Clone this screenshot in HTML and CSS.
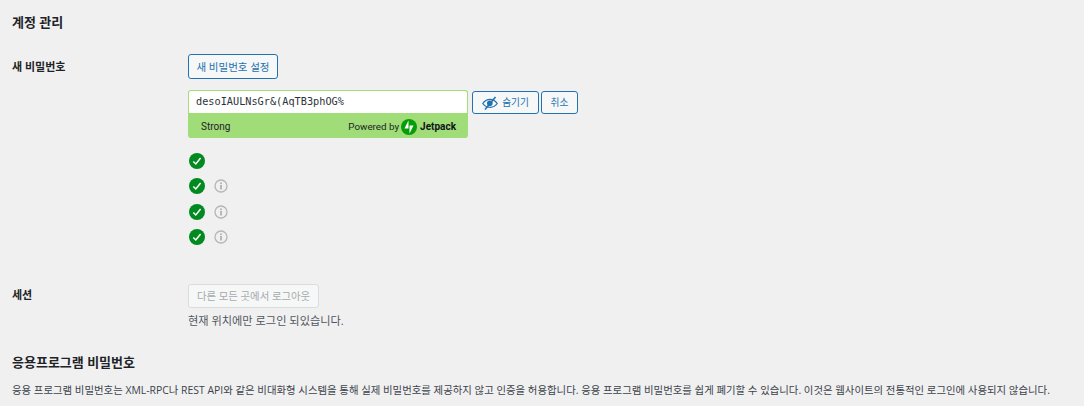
FILE: index.html
```html
<!DOCTYPE html>
<html lang="ko">
<head>
<meta charset="utf-8">
<title>계정 관리</title>
<link rel="stylesheet" href="styles.css">
</head>
<body>
<h2 class="title first">계정 관리</h2>
<div class="row pw-row">
  <div class="label">새 비밀번호</div>
  <div class="field">
    <button class="btn set-btn">새 비밀번호 설정</button>
    <div class="pw-line">
      <div class="pw-box">
        <div class="pw-input">desoIAULNsGr&amp;(AqTB3phOG%</div>
        <div class="meter">
          <span>Strong</span>
          <span class="powered">Powered by
            <svg class="jp" viewBox="0 0 32 32" width="16" height="16"><circle cx="16" cy="16" r="16" fill="#069e08"/><path fill="#fff" d="M15 19H7l8-16zM17 29V13h8z"/></svg>
            <b class="jp-word">Jetpack</b></span>
        </div>
      </div>
      <button class="btn hide-btn">
        <svg viewBox="0 0 16 16" width="16" height="16" class="eye"><path fill="none" stroke="#2271b1" stroke-width="1.300" d="M.8 8.500C2.500 5.800 5 4.300 8 4.300s5.500 1.500 7.200 4.200C13.500 11 11 12.300 8 12.300S2.500 11 .8 8.500z"/><circle cx="7.800" cy="8.300" r="2.800" fill="#2271b1"/><path stroke="#2271b1" stroke-width="1.600" d="M13.500 2L3 14.500"/></svg>
        숨기기</button>
      <button class="btn cancel-btn">취소</button>
    </div>
    <ul class="checks">
      <li><svg class="ok" viewBox="0 0 16 16" width="16" height="16"><circle cx="8" cy="8" r="8" fill="#008a20"/><path d="M4.300 8.500l2.500 2.500 4.800-6" fill="none" stroke="#fff" stroke-width="1.500"/></svg></li>
      <li><svg class="ok" viewBox="0 0 16 16" width="16" height="16"><circle cx="8" cy="8" r="8" fill="#008a20"/><path d="M4.300 8.500l2.500 2.500 4.800-6" fill="none" stroke="#fff" stroke-width="1.500"/></svg><svg class="info" viewBox="0 0 14 14" width="14" height="14"><circle cx="7" cy="7" r="6" fill="none" stroke="#b4b6b8" stroke-width="1.300"/><rect x="6.200" y="6" width="1.600" height="4.500" fill="#a7aaad"/><rect x="6.200" y="3.500" width="1.600" height="1.600" fill="#a7aaad"/></svg></li>
      <li><svg class="ok" viewBox="0 0 16 16" width="16" height="16"><circle cx="8" cy="8" r="8" fill="#008a20"/><path d="M4.300 8.500l2.500 2.500 4.800-6" fill="none" stroke="#fff" stroke-width="1.500"/></svg><svg class="info" viewBox="0 0 14 14" width="14" height="14"><circle cx="7" cy="7" r="6" fill="none" stroke="#b4b6b8" stroke-width="1.300"/><rect x="6.200" y="6" width="1.600" height="4.500" fill="#a7aaad"/><rect x="6.200" y="3.500" width="1.600" height="1.600" fill="#a7aaad"/></svg></li>
      <li><svg class="ok" viewBox="0 0 16 16" width="16" height="16"><circle cx="8" cy="8" r="8" fill="#008a20"/><path d="M4.300 8.500l2.500 2.500 4.800-6" fill="none" stroke="#fff" stroke-width="1.500"/></svg><svg class="info" viewBox="0 0 14 14" width="14" height="14"><circle cx="7" cy="7" r="6" fill="none" stroke="#b4b6b8" stroke-width="1.300"/><rect x="6.200" y="6" width="1.600" height="4.500" fill="#a7aaad"/><rect x="6.200" y="3.500" width="1.600" height="1.600" fill="#a7aaad"/></svg></li>
    </ul>
  </div>
</div>
<div class="row session-row">
  <div class="label">세션</div>
  <div class="field">
    <button class="btn disabled" disabled>다른 모든 곳에서 로그아웃</button>
    <p class="note">현재 위치에만 로그인 되있습니다.</p>
  </div>
</div>
<h2 class="title apps">응용프로그램 비밀번호</h2>
<p class="desc">응용 프로그램 비밀번호는 XML-RPC나 REST API와 같은 비대화형 시스템을 통해 실제 비밀번호를 제공하지 않고 인증을 허용합니다. 응용 프로그램 비밀번호를 쉽게 폐기할 수 있습니다. 이것은 웹사이트의 전통적인 로그인에 사용되지 않습니다.</p>
</body>
</html>
```
FILE: styles.css
```css
html, body { margin: 0; padding: 0; }
body {
  width: 1084px;
  height: 406px;
  overflow: hidden;
  background: #f0f0f1;
  color: #3c434a;
  padding-left: 12px;
  box-sizing: border-box;
  font: 11px/16px "Open Sans", "Noto Sans CJK KR", sans-serif;
}
.title {
  margin: 0;
  font-size: 13px;
  line-height: 18px;
  font-weight: 700;
  color: #1d2327;
}
.first { padding-top: 13px; }
.row { display: flex; }
.pw-row { margin-top: 23px; }
.session-row { margin-top: 29px; }
.label {
  width: 176px;
  flex: none;
  font-size: 11px;
  font-weight: 700;
  line-height: 16px;
  color: #1d2327;
  padding-top: 5px;
}
.session-row .label { padding-top: 3px; }
.btn {
  font: inherit;
  height: 25px;
  padding: 0 8px;
  border: 1px solid #2271b1;
  border-radius: 3px;
  background: #f6f7f7;
  color: #2271b1;
  box-sizing: border-box;
}
.set-btn { display: block; width: 90px; padding: 0; font-size: 10.500px; }
.pw-line { display: flex; align-items: flex-start; margin-top: 11px; }
.pw-box { width: 280px; }
.pw-input {
  height: 23px;
  box-sizing: border-box;
  background: #fff;
  border: 1px solid #a3dc78;
  border-bottom: 0;
  border-radius: 3px 3px 0 0;
  padding: 2px 7px;
  font: 10.240px/17px "DejaVu Sans Mono", monospace;
  color: #2c3338;
}
.meter {
  height: 25px;
  background: #a0dc78;
  border-radius: 0 0 3px 3px;
  display: flex;
  justify-content: space-between;
  align-items: center;
  padding: 2px 12px 0 13px;
  box-sizing: border-box;
  color: #1d2327;
  font: 10px/14px Roboto, sans-serif;
}
.powered { display: flex; align-items: center; gap: 2px; font-size: 9.800px; }
.jp-word { font: 700 10px/14px Roboto, sans-serif; color: #101517; margin-left: 1px; }
.hide-btn {
  margin-left: 4px;
  margin-top: 1px;
  height: 23px;
  width: 67px;
  padding: 0;
  display: flex;
  align-items: center;
  justify-content: center;
  gap: 4px;
  font-size: 9.700px;
}
.cancel-btn { margin-left: 2px; margin-top: 1px; height: 23px; width: 37px; padding: 0; font-size: 9.700px; }
.checks { list-style: none; margin: 15px 0 0; padding: 0 0 0 1px; display: grid; grid-auto-rows: 25.400px; }
.checks li { display: flex; align-items: center; gap: 9px; height: 16px; }
.ok, .info, .eye, .jp { flex: none; display: block; }
.disabled {
  width: 131px;
  height: 24px;
  padding: 0;
  display: block;
  border-color: #dcdcde;
  color: #a7aaad;
  background: #f6f7f7;
  font-size: 10.400px;
}
.note { margin: 5px 0 0; font-size: 11.200px; line-height: 16px; color: #50575e; }
.apps { margin-top: 24px; }
.desc { margin: 11px 0 0; font-size: 10.420px; line-height: 16px; white-space: nowrap; color: #3c434a; }
```
